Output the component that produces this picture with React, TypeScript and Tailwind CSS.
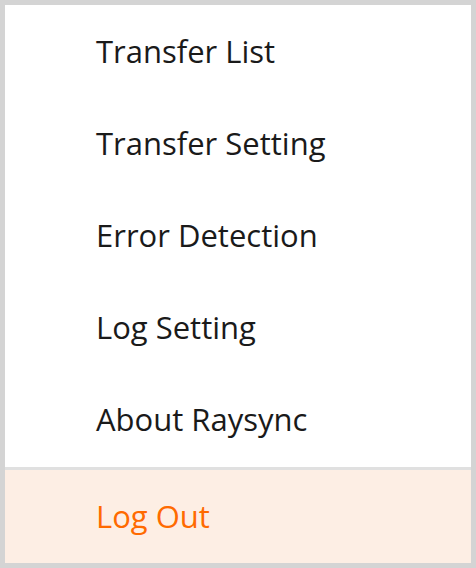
import React from "react";

const items = ["Transfer List", "Transfer Setting", "Error Detection", "Log Setting", "About Raysync"];

export default function App() {
  return (
    <div className="w-[476px] h-[568px] bg-[#d4d4d4] p-[5px]" style={{ fontFamily: '"Open Sans", "Noto Sans", sans-serif' }}>
      <div className="flex h-full flex-col bg-white">
        {items.map((t) => (
          <div key={t} className="flex h-[92px] items-center pl-[91px] text-[31px] text-[#1a1a1a]">
            {t}
          </div>
        ))}
        <div className="h-[2px] bg-white" />
        <div className="h-[3px] bg-[#e0e0e0]" />
        <div className="flex flex-1 items-center bg-[#fdeee4] pl-[91px] text-[31px] text-[#ff6a00]">Log Out</div>
      </div>
    </div>
  );
}
